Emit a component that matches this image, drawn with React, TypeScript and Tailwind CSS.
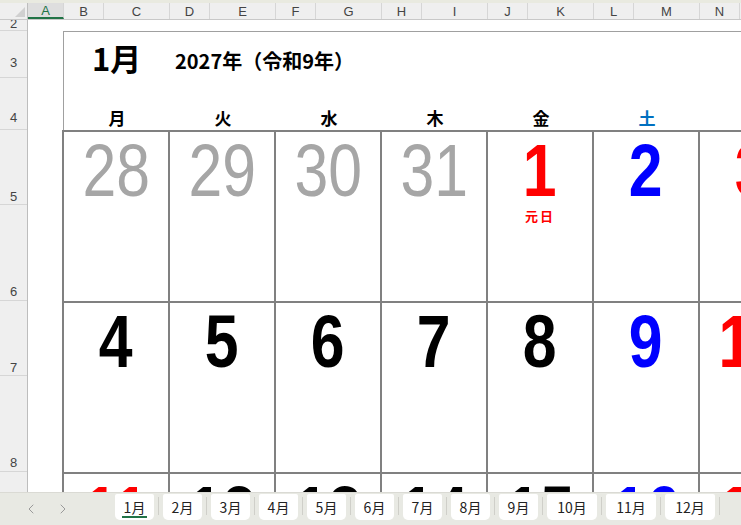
import { ChevronLeft, ChevronRight } from 'lucide-react';

const JP = 'font-["Noto_Sans_CJK_JP","Noto_Sans",sans-serif]';

const columns = [
  { label: 'A', w: 'w-[36px]', active: true },
  { label: 'B', w: 'w-[40px]' },
  { label: 'C', w: 'w-[66px]' },
  { label: 'D', w: 'w-[40px]' },
  { label: 'E', w: 'w-[66px]' },
  { label: 'F', w: 'w-[40px]' },
  { label: 'G', w: 'w-[66px]' },
  { label: 'H', w: 'w-[40px]' },
  { label: 'I', w: 'w-[66px]' },
  { label: 'J', w: 'w-[40px]' },
  { label: 'K', w: 'w-[66px]' },
  { label: 'L', w: 'w-[40px]' },
  { label: 'M', w: 'w-[66px]' },
  { label: 'N', w: 'w-[40px]' },
];

const rows = [
  { n: '2', h: 'h-[11px]', pb: 'pb-0' },
  { n: '3', h: 'h-[47px]', pb: 'pb-[8px]' },
  { n: '4', h: 'h-[52px]', pb: 'pb-[5px]' },
  { n: '5', h: 'h-[75px]', pb: 'pb-px' },
  { n: '6', h: 'h-[96px]', pb: 'pb-[2px]' },
  { n: '7', h: 'h-[75px]', pb: 'pb-px' },
  { n: '8', h: 'h-[96px]', pb: 'pb-[2px]' },
  { n: '9', h: 'h-[75px]', pb: 'pb-px' },
];

const weekdays = [
  { t: '月', c: 'text-black' },
  { t: '火', c: 'text-black' },
  { t: '水', c: 'text-black' },
  { t: '木', c: 'text-black' },
  { t: '金', c: 'text-black' },
  { t: '土', c: 'text-[#0070c0]' },
  { t: '日', c: 'text-[#ff0000]' },
];

type Day = { d: number; kind: 'prev' | 'day' | 'sat' | 'hol'; note?: string };

const weeks: Day[][] = [
  [
    { d: 28, kind: 'prev' }, { d: 29, kind: 'prev' }, { d: 30, kind: 'prev' }, { d: 31, kind: 'prev' },
    { d: 1, kind: 'hol', note: '元日' }, { d: 2, kind: 'sat' }, { d: 3, kind: 'hol' },
  ],
  [
    { d: 4, kind: 'day' }, { d: 5, kind: 'day' }, { d: 6, kind: 'day' }, { d: 7, kind: 'day' },
    { d: 8, kind: 'day' }, { d: 9, kind: 'sat' }, { d: 10, kind: 'hol' },
  ],
  [
    { d: 11, kind: 'hol', note: '成人の日' }, { d: 12, kind: 'day' }, { d: 13, kind: 'day' }, { d: 14, kind: 'day' },
    { d: 15, kind: 'day' }, { d: 16, kind: 'sat' }, { d: 17, kind: 'hol' },
  ],
];

const dayColor = {
  prev: 'text-[#a6a6a6] font-normal',
  day: 'text-black font-bold',
  sat: 'text-[#0000ff] font-bold',
  hol: 'text-[#ff0000] font-bold',
};

const tabs = ['1月', '2月', '3月', '4月', '5月', '6月', '7月', '8月', '9月', '10月', '11月', '12月'];

export default function App() {
  return (
    <div className="w-[741px] h-[525px] overflow-hidden flex flex-col bg-white font-['Liberation_Sans',sans-serif]">
      <div className="h-[3px] bg-[#e9eae0] shrink-0" />

      {/* column headers */}
      <div className="h-[17px] flex shrink-0 bg-[#efefef] border-b border-[#c8c8c8]">
        <div className="w-[28px] shrink-0 border-r border-[#bdbdbd] flex items-end justify-end pr-[2px] pb-[2px]">
          <svg width="10" height="10" viewBox="0 0 10 10">
            <polygon points="10,0 10,10 0,10" fill="#d0d0d0" />
          </svg>
        </div>
        {columns.map(c => (
          <div
            key={c.label}
            className={`${c.w} shrink-0 flex items-center justify-center text-[13px] leading-none border-r border-[#d6d6d6] ${c.active ? 'bg-[#dedede] text-[#217346] border-b-2 border-b-[#217346]' : 'text-[#444]'}`}
          >
            {c.label}
          </div>
        ))}
      </div>

      <div className="flex-1 flex overflow-hidden min-h-0">
        {/* row headers */}
        <div className="w-[28px] shrink-0 bg-[#efefef] border-r border-[#bdbdbd] flex flex-col">
          {rows.map(r => (
            <div
              key={r.n}
              className={`${r.h} ${r.pb} shrink-0 border-b border-[#d6d6d6] flex items-end justify-center text-[13px] leading-[13px] text-[#444] overflow-hidden`}
            >
              {r.n}
            </div>
          ))}
        </div>

        {/* sheet */}
        <div className="flex-1 overflow-hidden flex flex-col">
          <div className="h-[11px] shrink-0" />
          <div className={`ml-[35px] w-max shrink-0 border-l border-t border-[#a0a0a0] ${JP}`}>
            <div className="h-[46px] flex items-end pb-[5px] pl-[28px] text-black font-bold">
              <span className="w-[83px] text-[31px] leading-none">1月</span>
              <span className="text-[20px] leading-none pb-[2px]">2027年（令和9年）</span>
            </div>
            <div className="h-[52px] flex">
              {weekdays.map(w => (
                <div key={w.t} className={`w-[106px] shrink-0 flex items-end justify-center pb-[4px] text-[17px] leading-none font-bold ${w.c}`}>
                  {w.t}
                </div>
              ))}
            </div>
          </div>

          <div className="ml-[34px] w-max shrink-0 border-l-2 border-t-2 border-[#808080]">
            {weeks.map((wk, i) => (
              <div key={i} className="flex">
                {wk.map(day => (
                  <div
                    key={day.d}
                    className="w-[106px] h-[171px] shrink-0 border-r-2 border-b-2 border-[#808080] flex flex-col items-center pt-[2px]"
                  >
                    <span className={`inline-block scale-x-[0.82] text-[74px] leading-[74px] font-['Liberation_Sans',sans-serif] ${dayColor[day.kind]}`}>
                      {day.d}
                    </span>
                    {day.note && (
                      <span className={`mt-[1px] text-[13px] leading-none font-bold tracking-[2px] text-[#ff0000] ${JP}`}>
                        {day.note}
                      </span>
                    )}
                  </div>
                ))}
              </div>
            ))}
          </div>
        </div>
      </div>

      {/* sheet tabs */}
      <div className={`h-[33px] shrink-0 bg-[#e8e9e3] border-t border-[#dadad4] flex items-start ${JP}`}>
        <div className="w-[115px] shrink-0 h-full flex items-center pl-[23px] gap-[16px] text-[#9a9a9a]">
          <ChevronLeft size={16} strokeWidth={1.5} />
          <ChevronRight size={16} strokeWidth={1.5} />
        </div>
        {tabs.map((t, i) => (
          <div key={t} className="flex items-start">
            <div
              className={`${t.length > 2 ? 'w-[50px]' : 'w-[39px]'} h-[26px] mt-px bg-white rounded-b-[5px] rounded-t-[2px] flex flex-col items-center justify-center text-[14px] leading-none text-[#222]`}
            >
              <span className={i === 0 ? 'pt-[3px] pb-[2px] px-[2px] border-b-2 border-[#217346]' : ''}>{t}</span>
            </div>
            <div className="w-[9px] h-[26px] flex items-center justify-center">
              <div className="w-px h-[18px] bg-[#cfcfc9]" />
            </div>
          </div>
        ))}
      </div>
    </div>
  );
}
